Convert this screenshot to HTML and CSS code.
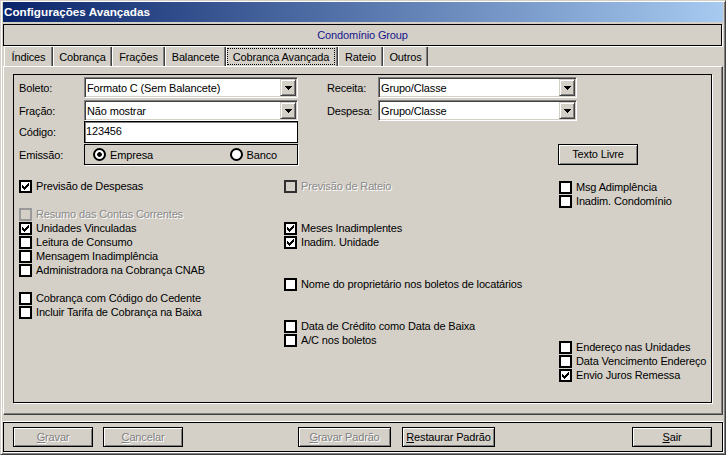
FILE: index.html
```html
<!DOCTYPE html>
<html lang="pt">
<head>
<meta charset="utf-8">
<title>Configurações Avançadas</title>
<link rel="stylesheet" href="styles.css">
</head>
<body>
<div class="window">
  <div class="titlebar">Configurações Avançadas</div>
  <div class="header">Condomínio Group</div>
  <div class="tabs">
    <div class="tab t-indices">Índices</div>
    <div class="tab t-cobranca">Cobrança</div>
    <div class="tab t-fracoes">Frações</div>
    <div class="tab t-balancete">Balancete</div>
    <div class="tab t-avancada active"><span>Cobrança Avançada</span></div>
    <div class="tab t-rateio">Rateio</div>
    <div class="tab t-outros">Outros</div>
  </div>
  <div class="tabpanel">
    <div class="panel">
      <div class="top">
        <div class="fields-left">
          <div class="row">
            <span class="lbl">Boleto:</span>
            <div class="combo"><span class="val">Formato C (Sem Balancete)</span><span class="dd"><svg width="7" height="4" viewBox="0 0 7 4"><path d="M0 0h7v1h-1v1h-1v1h-1v1h-1v-1h-1v-1h-1v-1h-1z"/></svg></span></div>
          </div>
          <div class="row">
            <span class="lbl">Fração:</span>
            <div class="combo"><span class="val">Não mostrar</span><span class="dd"><svg width="7" height="4" viewBox="0 0 7 4"><path d="M0 0h7v1h-1v1h-1v1h-1v1h-1v-1h-1v-1h-1v-1h-1z"/></svg></span></div>
          </div>
          <div class="row row-code">
            <span class="lbl">Código:</span>
            <div class="edit">123456</div>
          </div>
          <div class="row row-radio">
            <span class="lbl">Emissão:</span>
            <div class="radiogroup">
              <span class="radio-item"><span class="radio on"></span>Empresa</span>
              <span class="radio-item right"><span class="radio"></span>Banco</span>
            </div>
          </div>
        </div>
        <div class="fields-right">
          <div class="row">
            <span class="lbl lbl-r">Receita:</span>
            <div class="combo combo-r"><span class="val">Grupo/Classe</span><span class="dd"><svg width="7" height="4" viewBox="0 0 7 4"><path d="M0 0h7v1h-1v1h-1v1h-1v1h-1v-1h-1v-1h-1v-1h-1z"/></svg></span></div>
          </div>
          <div class="row">
            <span class="lbl lbl-r">Despesa:</span>
            <div class="combo combo-r"><span class="val">Grupo/Classe</span><span class="dd"><svg width="7" height="4" viewBox="0 0 7 4"><path d="M0 0h7v1h-1v1h-1v1h-1v1h-1v-1h-1v-1h-1v-1h-1z"/></svg></span></div>
          </div>
          <div class="btn btn-texto">Texto Livre</div>
        </div>
      </div>

      <div class="checks">
        <div class="col">
          <div class="cb"><span class="box"><svg width="9" height="9" viewBox="0 0 9 9"><path d="M1 3h1v1h1v1h1v-1h1v-1h1v-1h1v-1h1v3h-1v1h-1v1h-1v1h-1v1h-1v-1h-1v-1h-1z"/></svg></span>Previsão de Despesas</div>
          <div class="sp"></div>
          <div class="cb disabled"><span class="box dis-light"></span>Resumo das Contas Correntes</div>
          <div class="cb"><span class="box"><svg width="9" height="9" viewBox="0 0 9 9"><path d="M1 3h1v1h1v1h1v-1h1v-1h1v-1h1v-1h1v3h-1v1h-1v1h-1v1h-1v1h-1v-1h-1v-1h-1z"/></svg></span>Unidades Vinculadas</div>
          <div class="cb"><span class="box"></span>Leitura de Consumo</div>
          <div class="cb"><span class="box"></span>Mensagem Inadimplência</div>
          <div class="cb"><span class="box"></span>Administradora na Cobrança CNAB</div>
          <div class="sp"></div>
          <div class="cb"><span class="box"></span>Cobrança com Código do Cedente</div>
          <div class="cb"><span class="box"></span>Incluir Tarifa de Cobrança na Baixa</div>
        </div>
        <div class="col">
          <div class="cb disabled"><span class="box dis-dark"></span>Previsão de Rateio</div>
          <div class="sp2"></div>
          <div class="cb"><span class="box"><svg width="9" height="9" viewBox="0 0 9 9"><path d="M1 3h1v1h1v1h1v-1h1v-1h1v-1h1v-1h1v3h-1v1h-1v1h-1v1h-1v1h-1v-1h-1v-1h-1z"/></svg></span>Meses Inadimplentes</div>
          <div class="cb"><span class="box"><svg width="9" height="9" viewBox="0 0 9 9"><path d="M1 3h1v1h1v1h1v-1h1v-1h1v-1h1v-1h1v3h-1v1h-1v1h-1v1h-1v1h-1v-1h-1v-1h-1z"/></svg></span>Inadim. Unidade</div>
          <div class="sp2"></div>
          <div class="cb"><span class="box"></span>Nome do proprietário nos boletos de locatários</div>
          <div class="sp2"></div>
          <div class="cb"><span class="box"></span>Data de Crédito como Data de Baixa</div>
          <div class="cb"><span class="box"></span>A/C nos boletos</div>
        </div>
        <div class="col col3">
          <div class="cb"><span class="box"></span>Msg Adimplência</div>
          <div class="cb"><span class="box"></span>Inadim. Condomínio</div>
          <div class="sp-big"></div>
          <div class="cb"><span class="box"></span>Endereço nas Unidades</div>
          <div class="cb"><span class="box"></span>Data Vencimento Endereço</div>
          <div class="cb"><span class="box"><svg width="9" height="9" viewBox="0 0 9 9"><path d="M1 3h1v1h1v1h1v-1h1v-1h1v-1h1v-1h1v3h-1v1h-1v1h-1v1h-1v1h-1v-1h-1v-1h-1z"/></svg></span>Envio Juros Remessa</div>
        </div>
      </div>
    </div>
  </div>
  <div class="buttonbar">
    <div class="btn disabled"><u>G</u>ravar</div>
    <div class="btn disabled btn-cancel"><u>C</u>ancelar</div>
    <div class="btn disabled btn-wide btn-gpad"><u>G</u>ravar Padrão</div>
    <div class="btn btn-wide btn-rest"><u>R</u>estaurar Padrão</div>
    <div class="btn btn-sair"><u>S</u>air</div>
  </div>
</div>
</body>
</html>
```

FILE: styles.css
```css
* {
  box-sizing: border-box;
}

body {
  margin: 0;
  background: #d4d0c8;
  font-family: Tahoma, "Liberation Sans", Arial, sans-serif;
  font-size: 11px;
  letter-spacing: -0.15px;
  color: #000;
}

.window {
  width: 726px;
  height: 455px;
  border: 1px solid;
  border-color: #d4d0c8 #404040 #404040 #d4d0c8;
  box-shadow: inset 1px 1px 0 #fff, inset -1px -1px 0 #808080;
  padding: 1px 2px 2px 2px;
  display: flex;
  flex-direction: column;
}

.titlebar {
  height: 20px;
  flex: none;
  background: linear-gradient(to right, #0a246a, #a6caf0);
  color: #fff;
  font-weight: bold;
  font-size: 11.7px;
  letter-spacing: 0;
  line-height: 20px;
  padding-left: 1px;
}

.header {
  height: 22px;
  flex: none;
  margin: 2px 1px 0 0;
  border: 1px solid #000;
  box-shadow: 1px 1px 0 #fff;
  color: #14148c;
  text-align: center;
  line-height: 20px;
}

.tabs {
  display: flex;
  height: 19px;
  flex: none;
  margin-top: 1px;
  padding-left: 1px;
}

.tab {
  height: 19px;
  padding-top: 2px;
  line-height: 17px;
  text-align: center;
  border-left: 1px solid #fff;
  border-right: 1px solid #404040;
  box-shadow: inset -1px 0 0 #808080;
  white-space: nowrap;
}

.t-indices { width: 49px; }
.t-cobranca { width: 59px; }
.t-fracoes { width: 53px; }
.t-balancete { width: 61px; }
.t-avancada { width: 112px; }
.t-rateio { width: 45px; }
.t-outros { width: 45px; }

.tab.active {
  padding: 1px 2px 1px 0;
}

.tab.active span {
  display: block;
  height: 17px;
  padding-top: 1px;
  line-height: 16px;
  outline: 1px dotted #000;
  outline-offset: -1px;
}

.tabpanel {
  height: 349px;
  flex: none;
  border-top: 1px solid #fff;
  border-left: 1px solid #fff;
  border-right: 1px solid #404040;
  border-bottom: 1px solid #404040;
  box-shadow: inset -1px -1px 0 #808080;
  padding: 7px 10px 11px 9px;
}

.panel {
  height: 329px;
  border: 1px solid #000;
  box-shadow: 1px 1px 0 #fff;
  padding: 2px 0 0 5px;
}

.top {
  display: flex;
}

.fields-left {
  width: 279px;
  display: flex;
  flex-direction: column;
}

.fields-right {
  margin-left: 29px;
  display: flex;
  flex-direction: column;
}

.row {
  display: flex;
  height: 21px;
  margin-bottom: 2px;
}

.row-code {
  height: 22px;
  margin-top: -2px;
  margin-bottom: 1px;
}

.row-radio {
  margin-bottom: 0;
}

.lbl {
  width: 65px;
  flex: none;
  line-height: 20px;
  padding-top: 1px;
}

.lbl-r {
  width: 51px;
}

.combo {
  width: 214px;
  height: 21px;
  display: flex;
  border: 1px solid;
  border-color: #808080 #fff #fff #808080;
  box-shadow: inset 1px 1px 0 #404040, inset -1px -1px 0 #d4d0c8;
  background: #fff;
  padding: 1px;
}

.combo-r {
  width: 199px;
}

.val {
  flex: 1;
  padding-left: 1px;
  line-height: 18px;
  white-space: nowrap;
}

.dd {
  width: 16px;
  height: 17px;
  flex: none;
  background: #d4d0c8;
  border: 1px solid;
  border-color: #d4d0c8 #404040 #404040 #d4d0c8;
  box-shadow: inset 1px 1px 0 #fff, inset -1px -1px 0 #808080;
  display: flex;
  align-items: center;
  justify-content: center;
}

.dd svg {
  display: block;
  fill: #000;
}

.edit {
  width: 214px;
  height: 22px;
  border: 1px solid #000;
  box-shadow: inset 1px 1px 0 #808080;
  background: #fff;
  padding-left: 1px;
  line-height: 19px;
}

.radiogroup {
  width: 214px;
  height: 21px;
  border: 1px solid #000;
  box-shadow: 1px 1px 0 #fff;
  display: flex;
  align-items: center;
  padding: 0 20px 0 8px;
}

.radio-item {
  display: flex;
  align-items: center;
  line-height: 14px;
}

.radio-item.right {
  margin-left: auto;
}

.radio {
  width: 13px;
  height: 13px;
  border-radius: 50%;
  border: 2px solid #000;
  background: #fff;
  margin-right: 4px;
  flex: none;
}

.radio.on {
  background: radial-gradient(circle, #000 0, #000 2px, #fff 2.6px);
}

.btn {
  width: 80px;
  height: 20px;
  border: 1px solid #000;
  box-shadow: inset 1px 1px 0 #fff, inset -1px -1px 0 #808080;
  background: #d4d0c8;
  text-align: center;
  line-height: 18px;
  white-space: nowrap;
  flex: none;
}

.btn.disabled {
  color: #808080;
  text-shadow: 1px 1px 0 #fff;
}

.btn-texto {
  height: 21px;
  line-height: 19px;
  margin-top: 21px;
  margin-left: 231px;
}

.checks {
  display: grid;
  grid-template-columns: 265px 275px 1fr;
  margin-top: 14px;
}

.col {
  display: flex;
  flex-direction: column;
}

.col3 {
  margin-top: 1px;
}

.cb {
  height: 14px;
  display: flex;
  align-items: flex-start;
  line-height: 14px;
  white-space: nowrap;
}

.cb.disabled {
  color: #8a8a8a;
  text-shadow: 1px 1px 0 #fff;
}

.box {
  width: 13px;
  height: 13px;
  margin-top: 1px;
  margin-right: 4px;
  flex: none;
  border: 2px solid #000;
  background: #fff;
}

.box svg {
  display: block;
  fill: #000;
}

.box.dis-light {
  border-color: #9a9a9a;
  background: #d4d0c8;
}

.box.dis-dark {
  border-color: #303030;
  background: #d4d0c8;
}

.sp {
  height: 14px;
}

.sp2 {
  height: 28px;
}

.sp-big {
  height: 132px;
}

.buttonbar {
  height: 30px;
  flex: none;
  margin-top: 7px;
  border: 1px solid #000;
  box-shadow: 1px 1px 0 #fff, 0 -1px 0 #fff;
  display: flex;
  padding: 4px 10px 0 9px;
}

.btn-cancel {
  margin-left: 10px;
}

.btn-wide {
  width: 93px;
}

.btn-gpad {
  margin-left: 115px;
}

.btn-rest {
  margin-left: 11px;
}

.btn-sair {
  margin-left: auto;
}
```
